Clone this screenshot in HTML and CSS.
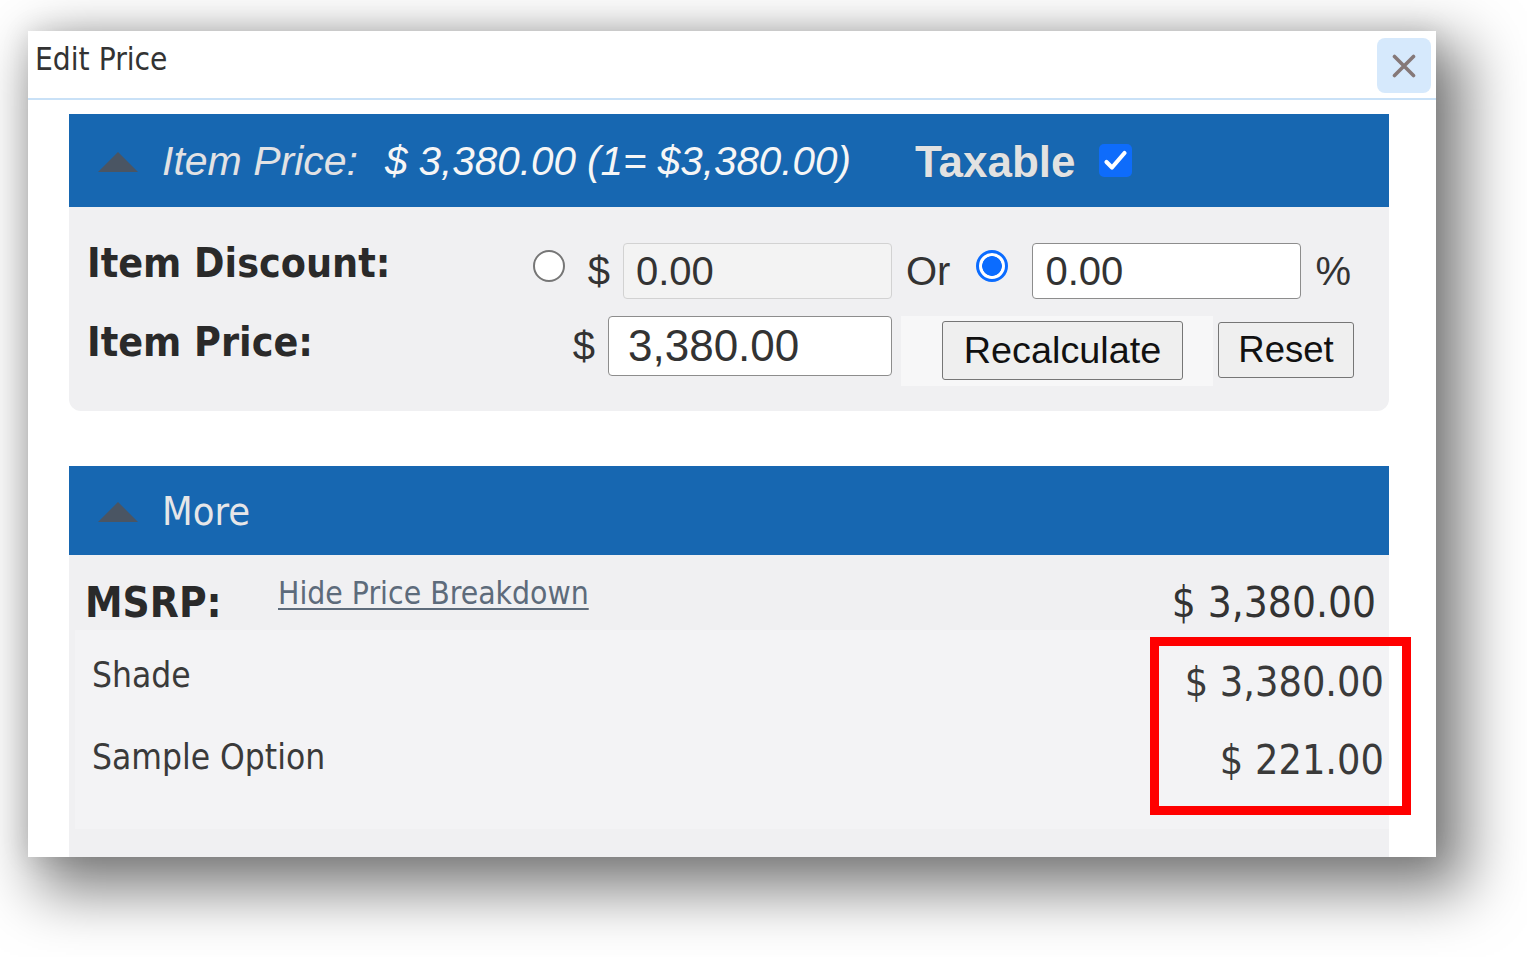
FILE: index.html
```html
<!DOCTYPE html>
<html lang="en">
<head>
<meta charset="utf-8">
<title>Edit Price</title>
<link rel="stylesheet" href="styles.css">
</head>
<body>
<div class="dialog">
  <div class="titlebar">
    <span class="title">Edit Price</span>
    <button class="close" type="button" aria-label="Close">
      <svg viewBox="0 0 24 24" width="24" height="24"><path d="M2.5 2.5L21.5 21.5M21.5 2.5L2.5 21.5" stroke="#857878" stroke-width="3.6" stroke-linecap="round" fill="none"/></svg>
    </button>
  </div>
  <div class="content">
    <section class="section">
      <div class="bar">
        <span class="caret"></span>
        <span class="bar-label">Item Price:</span>
        <span class="bar-value">$ 3,380.00 (1= $3,380.00)</span>
        <span class="taxable">Taxable</span>
        <span class="checkbox"><svg viewBox="0 0 33 33" width="33" height="33"><path d="M7.5 18L13 23.5L25.5 9" stroke="#fff" stroke-width="4.2" stroke-linecap="round" stroke-linejoin="round" fill="none"/></svg></span>
      </div>
      <div class="panel">
        <div class="frow r1">
          <div class="flabel">Item Discount:</div>
          <div class="fmid">
            <span class="radio"></span>
            <span class="cur">$</span>
            <input class="field disabled" type="text" value="0.00" disabled>
          </div>
          <div class="frest">
            <span class="or">Or</span>
            <span class="radio on"></span>
            <input class="field pct" type="text" value="0.00">
            <span class="pctsign">%</span>
          </div>
        </div>
        <div class="frow r2">
          <div class="flabel">Item Price:</div>
          <div class="fmid">
            <span class="cur tall">$</span>
            <input class="field price" type="text" value="3,380.00">
          </div>
          <div class="frest">
            <div class="btncell"><button class="btn recalc" type="button">Recalculate</button></div>
            <button class="btn reset" type="button">Reset</button>
          </div>
        </div>
      </div>
    </section>
    <section class="section more">
      <div class="bar">
        <span class="caret"></span>
        <span class="bar-title">More</span>
      </div>
      <div class="more-body">
        <div class="msrp-row">
          <span class="msrp">MSRP:</span>
          <a class="toggle" href="#">Hide Price Breakdown</a>
          <span class="msrp-price">$ 3,380.00</span>
        </div>
        <div class="breakdown">
          <span class="bd-name">Shade</span>
          <span class="bd-price first">$ 3,380.00</span>
          <span class="bd-name">Sample Option</span>
          <span class="bd-price">$ 221.00</span>
        </div>
      </div>
    </section>
  </div>
  <div class="highlight"></div>
</div>
</body>
</html>
```

FILE: styles.css
```css
html, body {
  margin: 0;
  padding: 0;
  background: #ffffff;
}

html {
  height: 100%;
}

body {
  box-sizing: border-box;
  height: 100%;
  padding: 31px 0 0 28px;
  font-family: "DejaVu Sans", sans-serif;
  font-stretch: semi-condensed;
  overflow: hidden;
}

.dialog {
  position: relative;
  width: 1408px;
  height: 826px;
  background: #ffffff;
  overflow: hidden;
  box-shadow: 20px 24px 56px 10px rgba(0, 0, 0, 0.5), 0 0 26px rgba(0, 0, 0, 0.12);
}

.titlebar {
  display: flex;
  align-items: flex-start;
  justify-content: space-between;
  height: 67px;
  border-bottom: 2px solid #c9e1f7;
}

.title {
  padding: 13px 0 0 7px;
  font-size: 31.4px;
  line-height: 1;
  color: #333333;
}

.close {
  display: flex;
  align-items: center;
  justify-content: center;
  width: 54px;
  height: 55px;
  margin: 7px 5px 0 0;
  padding: 0;
  border: none;
  border-radius: 8px;
  background: #d6e9fc;
}

.content {
  padding: 14px 47px 0 41px;
}

.bar {
  display: flex;
  align-items: center;
  height: 93px;
  padding: 2px 0 0 29px;
  box-sizing: border-box;
  background: #1767b1;
}

.caret {
  width: 0;
  height: 0;
  border-left: 20.5px solid transparent;
  border-right: 20.5px solid transparent;
  border-bottom: 20px solid #4a5563;
  margin-right: 24px;
}

.bar-label,
.bar-value {
  font-family: "Liberation Sans", Arial, sans-serif;
  font-stretch: normal;
  font-style: italic;
}

.bar-label {
  font-size: 41px;
  color: #e2e2e4;
  margin-right: 27px;
}

.bar-value {
  font-size: 40.4px;
  color: #f6f6f6;
  margin-right: 64px;
}

.taxable {
  font-family: "Liberation Sans", Arial, sans-serif;
  font-stretch: normal;
  font-weight: bold;
  font-size: 44px;
  color: #e2e2e2;
  text-shadow: 0 0 1px rgba(0, 0, 0, 0.35);
  margin-right: 23px;
}

.checkbox {
  display: block;
  width: 33px;
  height: 33px;
  border-radius: 5px;
  background: #0e6cfb;
  margin-top: -3px;
}

.checkbox svg {
  display: block;
}

.panel {
  background: #f0f0f2;
  border-radius: 0 0 12px 12px;
  padding: 36px 0 31px 18px;
}

.frow {
  display: flex;
  align-items: flex-start;
}

.frow.r1 {
  height: 56px;
}

.frow.r2 {
  height: 64px;
  margin-top: 17px;
}

.flabel {
  flex: 0 0 433px;
  font-weight: bold;
  font-size: 40.8px;
  line-height: 1;
  color: #2a2a2a;
}

.r2 .flabel {
  margin-top: 6px;
}

.fmid {
  flex: 0 0 372px;
  display: flex;
  align-items: flex-start;
  justify-content: flex-end;
}

.frest {
  display: flex;
  align-items: flex-start;
}

.radio {
  display: block;
  box-sizing: border-box;
  width: 32px;
  height: 32px;
  margin-top: 7px;
  border: 2px solid #767676;
  border-radius: 50%;
  background: #ffffff;
}

.radio.on {
  border: 3px solid #0b6cff;
  background: radial-gradient(circle, #0b6cff 0 9.5px, #ffffff 10.2px);
}

.fmid .radio {
  margin-right: 23px;
}

.cur,
.or,
.pctsign {
  display: flex;
  align-items: center;
  height: 56px;
  font-family: "Liberation Sans", Arial, sans-serif;
  font-stretch: normal;
  font-size: 40px;
  color: #333333;
}

.cur {
  margin-right: 13px;
}

.cur.tall {
  height: 60px;
}

.or {
  margin: 0 26px 0 14px;
}

.pctsign {
  margin-left: 14px;
}

.field {
  box-sizing: border-box;
  height: 56px;
  width: 269px;
  margin: 0;
  padding: 0 0 0 12px;
  border: 1px solid #8d8d8d;
  border-radius: 4px;
  background: #ffffff;
  font-family: "Liberation Sans", Arial, sans-serif;
  font-size: 40px;
  color: #333333;
  outline: none;
}

.field.disabled {
  background: #f3f3f3;
  border-color: #d2d2d2;
  color: #333333;
  -webkit-text-fill-color: #333333;
  opacity: 1;
}

.field.pct {
  margin-left: 24px;
}

.field.price {
  width: 284px;
  height: 60px;
  padding-left: 19px;
  font-size: 44px;
}

.btncell {
  width: 312px;
  height: 70px;
  margin-left: 9px;
  padding: 5px 0 0 41px;
  box-sizing: border-box;
  background: #f7f7f8;
}

.btn {
  box-sizing: border-box;
  margin: 0;
  padding: 0;
  border: 1px solid #767676;
  border-radius: 3px;
  background: #efefef;
  font-family: "Liberation Sans", Arial, sans-serif;
  color: #111111;
}

.btn.recalc {
  width: 241px;
  height: 59px;
  font-size: 37.8px;
}

.btn.reset {
  width: 136px;
  height: 56px;
  margin: 6px 0 0 5px;
  font-size: 36.5px;
}

.section.more {
  margin-top: 55px;
}

.section.more .bar {
  height: 89px;
}

.bar-title {
  font-size: 39.5px;
  line-height: 1;
  color: #e6e6e8;
}

.more-body {
  background: #f0f0f2;
  padding-bottom: 60px;
}

.msrp-row {
  display: flex;
  align-items: flex-start;
  height: 75px;
  padding: 0 13px 0 16px;
}

.msrp {
  flex: 0 0 193px;
  margin-top: 27px;
  font-weight: bold;
  font-size: 42px;
  line-height: 1;
  color: #2a2a2a;
}

.toggle {
  margin-top: 23px;
  font-size: 31.6px;
  line-height: 1;
  color: #5d6b7b;
  text-decoration: underline;
  text-decoration-thickness: 1.5px;
  text-underline-offset: 4px;
}

.msrp-price {
  margin: 27px 0 0 auto;
  font-size: 42px;
  line-height: 1;
  color: #333333;
}

.breakdown {
  display: grid;
  grid-template-columns: 1fr auto;
  grid-template-rows: 82px auto;
  align-items: start;
  margin-left: 6px;
  padding: 28px 5px 48px 17px;
  background: #f3f3f5;
}

.bd-name {
  font-size: 35px;
  line-height: 1;
  color: #3a3a3a;
}

.bd-price {
  font-size: 41px;
  line-height: 1;
  color: #3a3a3a;
  text-align: right;
}

.bd-price.first {
  margin-top: 4px;
}

.highlight {
  position: absolute;
  left: 1122px;
  top: 606px;
  width: 261px;
  height: 178px;
  box-sizing: border-box;
  border: 9px solid #ff0000;
}
```
